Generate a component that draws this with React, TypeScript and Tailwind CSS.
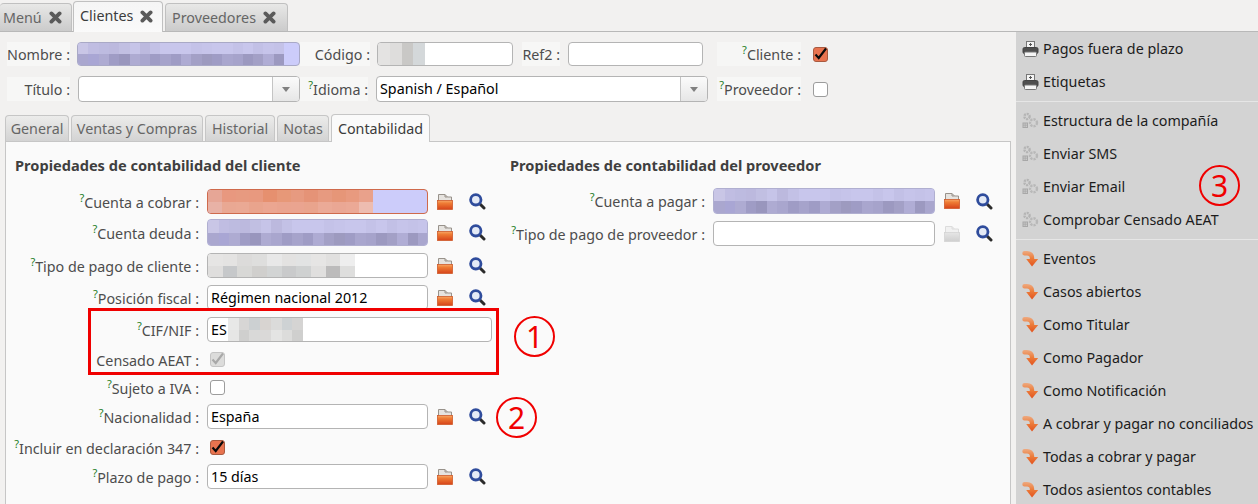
import React from "react";

// --- small drawn icons ---
const FolderIcon = ({ off = false }: { off?: boolean }) => (
  <svg width="16" height="16" viewBox="0 0 16 16" className="shrink-0">
    <defs>
      <linearGradient id="fo" x1="0" y1="0" x2="0" y2="1">
        <stop offset="0" stopColor="#f7a868" />
        <stop offset="0.3" stopColor="#ef7d35" />
        <stop offset="1" stopColor="#d6431a" />
      </linearGradient>
      <linearGradient id="fg" x1="0" y1="0" x2="0" y2="1">
        <stop offset="0" stopColor="#e6e6e6" />
        <stop offset="1" stopColor="#cfcfcf" />
      </linearGradient>
    </defs>
    <path d="M1.5 8V0.5h6.5l2.5 2.5H14.5V8z" fill={off ? "#f1f1f1" : "#e6e3df"} stroke={off ? "#dcdcdc" : "#98928b"} />
    <path d="M8 0.5V3h2.5" fill="none" stroke={off ? "#dcdcdc" : "#98928b"} />
    <rect x="0.5" y="6.5" width="15" height="9" fill={off ? "url(#fg)" : "url(#fo)"} stroke={off ? "#d4d4d4" : "#cf5a2a"} strokeWidth="0.8" />
  </svg>
);

const SearchIcon = () => (
  <svg width="17" height="17" viewBox="0 0 17 17" className="shrink-0">
    <line x1="10.5" y1="10.5" x2="15" y2="15" stroke="#2b2b2b" strokeWidth="3" strokeLinecap="round" />
    <circle cx="6.8" cy="6.8" r="5.2" fill="#e4eaf6" stroke="#2f4c9c" strokeWidth="2.8" />
  </svg>
);

const PrintIcon = () => (
  <svg width="17" height="16" viewBox="0 0 17 16" className="shrink-0">
    <rect x="4.5" y="0.5" width="8" height="7" fill="#f4f4f4" stroke="#777" />
    <path d="M8.5 2v3M7 3.5h3" stroke="#555" />
    <rect x="1" y="6.5" width="15" height="6" rx="1.5" fill="#4f4f4f" stroke="#444" />
    <rect x="2.5" y="11" width="12" height="4.5" rx="1" fill="#f5f5f5" stroke="#777" />
  </svg>
);

const GearIcon = () => (
  <svg width="17" height="17" viewBox="0 0 17 17" className="shrink-0">
    <circle cx="5" cy="4.5" r="2.6" fill="none" stroke="#b4b4b4" strokeWidth="2.4" strokeDasharray="2 0.9" />
    <circle cx="11.5" cy="10.8" r="3.5" fill="none" stroke="#b8b8b8" strokeWidth="2.4" strokeDasharray="2.2 1" />
    <rect x="1" y="11" width="4.5" height="4.5" fill="#c9c9c9" stroke="#a8a8a8" />
    <path d="M3.2 11v4.5M1 13.2h4.5" stroke="#a8a8a8" strokeWidth="0.7" />
  </svg>
);

const ArrowIcon = () => (
  <svg width="17" height="17" viewBox="0 0 17 17" className="shrink-0">
    <defs>
      <linearGradient id="ar" gradientUnits="userSpaceOnUse" x1="0" y1="0" x2="0" y2="17">
        <stop offset="0" stopColor="#eeb08a" />
        <stop offset="0.5" stopColor="#ec7c3a" />
        <stop offset="1" stopColor="#e2501c" />
      </linearGradient>
    </defs>
    <path d="M2.5 3.2H5C8 3.2 10 4.8 10 8v2" fill="none" stroke="url(#ar)" strokeWidth="4.4" strokeLinecap="round" />
    <path d="M4.2 9h12L10 16.5z" fill="url(#ar)" strokeLinejoin="round" />
  </svg>
);

const Pixels = ({ w, h, rows }: { w: number; h: number; rows: string[][] }) => (
  <svg width={w} height={h} viewBox={`0 0 ${w} ${h}`} shapeRendering="crispEdges" className="block shrink-0">
    {rows.map((cols, r) =>
      cols.map((c, i) => (
        <rect key={`${r}-${i}`} x={(i * w) / cols.length} y={(r * h) / rows.length} width={w / cols.length + 0.5} height={h / rows.length + 0.5} fill={c} />
      ))
    )}
  </svg>
);

const Help = () => <sup className="text-[11px] text-[#1d7d1d] top-[-6px] leading-none">?</sup>;

const Label = ({ text, help, className }: { text: string; help?: boolean; className: string }) => (
  <div className={`shrink-0 text-right whitespace-nowrap text-[#4d4d4d] pt-[2px] ${className}`}>
    {help && <Help />}
    {text} :
  </div>
);

const Check = ({ state }: { state: "on" | "off" | "locked" }) => {
  if (state === "off") return <div className="w-[15px] h-[15px] rounded-[3px] border border-[#9c9c9c] bg-white shrink-0" />;
  const on = state === "on";
  return (
    <div className={`w-[15px] h-[15px] rounded-[3px] border shrink-0 flex items-center justify-center ${on ? "bg-[#e8734f] border-[#a85a40]" : "bg-[#dcdcdb] border-[#c4c4c4]"}`}>
      <svg width="15" height="15" viewBox="0 0 15 15" className="shrink-0">
        <path d="M2.5 7.5l3.2 3.5L13 1.5" fill="none" stroke={on ? "#0a0a0a" : "#a8a8a8"} strokeWidth="2.1" />
      </svg>
    </div>
  );
};

const Field = ({ className, children }: { className: string; children?: React.ReactNode }) => (
  <div className={`shrink-0 rounded-[4px] border flex items-center overflow-hidden text-black ${className}`}>{children}</div>
);

const Chevron = ({ wide }: { wide: string }) => (
  <div className={`ml-auto h-full border-l border-[#c4c4c4] bg-gradient-to-b from-[#fbfbfb] to-[#e6e6e6] flex items-center justify-center ${wide}`}>
    <div className="w-0 h-0 border-l-[4px] border-r-[4px] border-t-[5px] border-l-transparent border-r-transparent border-t-[#808080]" />
  </div>
);

const Note = ({ n, className }: { n: string; className: string }) => (
  <div className={`absolute w-[41px] h-[41px] rounded-full border-[2.5px] border-[#f00000] text-[#f00000] text-[30px] leading-none flex items-center justify-center ${className}`}>
    {n}
  </div>
);

const TopTab = ({ text, active, className }: { text: string; active?: boolean; className: string }) => (
  <div
    className={`flex items-center gap-[7px] border border-b-0 border-[#c0c0c0] rounded-t-[4px] whitespace-nowrap ${
      active ? "h-[31px] pb-[2px] bg-gradient-to-b from-[#f5f5f5] to-[#fafafa] text-[#3c3c3c] z-10 -mb-px" : "h-[28px] bg-gradient-to-b from-[#e8e8e7] to-[#cbcbcb] text-[#666]"
    } ${className}`}
  >
    {text}
    <svg width="13" height="13" viewBox="0 0 13 13" className="shrink-0">
      <path d="M2.4 2.4l8.2 8.2M10.6 2.4l-8.2 8.2" stroke="#5a5a5a" strokeWidth="3.8" strokeLinecap="round" />
    </svg>
  </div>
);

const InnerTab = ({ text, active, className }: { text: string; active?: boolean; className: string }) => (
  <div
    className={`flex items-center justify-center border border-b-0 border-[#c6c6c6] rounded-t-[4px] whitespace-nowrap ${
      active ? "h-[28px] bg-[#fafafa] text-[#3c3c3c] z-10 -mb-px" : "h-[26px] bg-gradient-to-b from-[#ececeb] to-[#d3d3d3] text-[#666]"
    } ${className}`}
  >
    {text}
  </div>
);

const Tools = ({ off }: { off?: boolean }) => (
  <div className="flex items-center shrink-0">
    <div className="ml-[9px]">
      <FolderIcon off={off} />
    </div>
    <div className="ml-[16px]">
      <SearchIcon />
    </div>
  </div>
);

const boxWhite = "ml-[8px] h-[25px] w-[221px] bg-white border-[#b4b4b4] pl-[3px]";

const lilacTop = ["#c9c6e6", "#c0bde2", "#bdbbe0", "#bcb9de", "#c1bfe2", "#c6c4e8", "#bcb9de", "#c3c1e6", "#c8c6ec", "#c8c6ec", "#c8c6ec", "#c4c2e8", "#c6c4ea", "#c8c6ec", "#c8c6ec", "#c4c2e8", "#c8c6ec", "#c2c0e6", "#c6c4ea", "#c4c2e8", "#c6c4ea"];
const lilacLow = ["#aaa7cf", "#a9a6d4", "#aeabd2", "#9f9cc5", "#9996bd", "#aeabd2", "#a9a6ce", "#9f9cc5", "#a6a3cb", "#9f9cc5", "#aeabd3", "#a3a0c6", "#9d9abf", "#9f9cc5", "#a9a6ce", "#a6a3cb", "#9c99c0", "#a3a0c6", "#b0add5", "#9c99c0", "#a9a6ce"];

const sideA = ["Estructura de la compañía", "Enviar SMS", "Enviar Email", "Comprobar Censado AEAT"];
const sideB = ["Eventos", "Casos abiertos", "Como Titular", "Como Pagador", "Como Notificación", "A cobrar y pagar no conciliados", "Todas a cobrar y pagar", "Todos asientos contables"];

const SideItem = ({ icon, text }: { icon: React.ReactNode; text: string }) => (
  <div className="h-[33px] flex items-center pl-[6px] gap-[4px] whitespace-nowrap text-[#1c1c1c]">
    {icon}
    <span>{text}</span>
  </div>
);

export default function App() {
  return (
    <div className="relative w-[1258px] h-[504px] overflow-hidden bg-[#f2f1f0] flex flex-col text-[14.3px] font-['Noto_Sans',sans-serif]">
      {/* window tabs */}
      <div className="h-[32px] shrink-0 border-b border-[#b8b8b8] flex items-end pl-0 gap-[1px]">
        <TopTab text="Menú" className="w-[72px] pl-[3px] border-l-0" />
        <TopTab text="Clientes" active className="w-[90px] pl-[6px]" />
        <TopTab text="Proveedores" className="w-[123px] pl-[6px] ml-[1px]" />
      </div>

      <div className="flex flex-1 min-h-0">
        <div className="w-[1016px] shrink-0 flex flex-col">
          {/* header form */}
          <div className="flex items-center h-[24px] mt-[10px] pl-[7px]">
            <Label text="Nombre" className="w-[63px] bg-[#f7f7f6]" />
            <Field className="ml-[7px] h-[24px] w-[223px] bg-[#ccccfa] border-[#a9a9c6]">
              <Pixels w={206} h={24} rows={[lilacTop.slice(0, 20), lilacLow.slice(0, 20)]} />
            </Field>
            <Label text="Código" className="w-[70px] bg-[#f7f7f6] pl-[6px] ml-0" />
            <Field className="ml-[7px] h-[24px] w-[136px] bg-white border-[#b4b4b4]">
              <Pixels w={47} h={24} rows={[["#e4e3e2", "#dedddc", "#c9c8c6", "#d4d8da"]]} />
            </Field>
            <Label text="Ref2" className="w-[38px] ml-[9px] bg-[#f7f7f6]" />
            <Field className="ml-[8px] h-[24px] w-[135px] bg-white border-[#b4b4b4]" />
            <Label text="Cliente" help className="w-[84px] ml-[14px] bg-[#f6f6f5]" />
            <div className="ml-[12px]">
              <Check state="on" />
            </div>
          </div>
          <div className="flex items-center h-[26px] mt-[10px] pl-[7px]">
            <Label text="Título" className="w-[63px] bg-[#f7f7f6]" />
            <Field className="ml-[8px] h-[26px] w-[222px] bg-white border-[#b4b4b4]">
              <Chevron wide="w-[27px]" />
            </Field>
            <Label text="Idioma" help className="w-[68px] bg-[#f7f7f6] ml-0" />
            <Field className="ml-[8px] h-[26px] w-[332px] bg-white border-[#b4b4b4] pl-[3px]">
              <span>Spanish / Español</span>
              <Chevron wide="w-[27px]" />
            </Field>
            <Label text="Proveedor" help className="w-[84px] ml-[9px] bg-[#f7f7f6]" />
            <div className="ml-[12px]">
              <Check state="off" />
            </div>
          </div>

          {/* notebook tabs */}
          <div className="flex items-end h-[28px] mt-[11px] pl-[5px] gap-[2px]">
            <InnerTab text="General" className="w-[64px]" />
            <InnerTab text="Ventas y Compras" className="w-[132px]" />
            <InnerTab text="Historial" className="w-[70px]" />
            <InnerTab text="Notas" className="w-[52px]" />
            <InnerTab text="Contabilidad" active className="w-[99px]" />
          </div>

          <div className="flex-1 ml-[5px] mr-[5px] border border-b-0 border-[#c6c6c6] bg-[#fafafa] flex">
            {/* customer column */}
            <div className="w-[504px] shrink-0 flex flex-col">
              <div className="h-[20px] mt-[13px] pl-[9px] font-bold text-[#3f3f3f] text-[14.6px] whitespace-nowrap">Propiedades de contabilidad del cliente</div>
              <div className="flex items-center mt-[14px] h-[25px]">
                <Label text="Cuenta a cobrar" help className="w-[193px]" />
                <Field className="ml-[8px] h-[25px] w-[221px] bg-[#ccccfa] border-[#cf6a4c]">
                  <Pixels w={165} h={23} rows={[["#e6a696", "#e8987f", "#e79a80", "#e8997f", "#e6906f", "#e79878", "#e79a80", "#e59377", "#e79a80", "#e69678", "#e89a7f", "#e9a18b"], ["#e8b2a6", "#e9a893", "#eaa994", "#e9a48d", "#eba691", "#eaa48f", "#eaa490", "#e9a48d", "#ebaa97", "#eaa794", "#eba996", "#edbcb0"]]} />
                </Field>
                <Tools />
              </div>
              <div className="flex items-center mt-[5px] h-[27px]">
                <Label text="Cuenta deuda" help className="w-[193px]" />
                <Field className="ml-[8px] h-[27px] w-[221px] bg-[#ccccfa] border-[#b0afd0]">
                  <Pixels w={221} h={27} rows={[lilacTop, lilacLow]} />
                </Field>
                <Tools />
              </div>
              <div className="flex items-center mt-[7px] h-[25px]">
                <Label text="Tipo de pago de cliente" help className="w-[193px]" />
                <Field className={boxWhite + " !pl-0"}>
                  <Pixels w={147} h={23} rows={[["#e6e5e4", "#e4e3e2", "#dcdbda", "#dededd", "#e8e8e8", "#e3e2e1", "#e2e3e3", "#e6e5e4", "#e1e0df", "#eeeeee"], ["#dfdedd", "#c6c8ca", "#d8d8d6", "#d0cfcd", "#d2d4d4", "#c9cacb", "#cfd1d1", "#e0dfde", "#bcbbbb", "#dededd"]]} />
                </Field>
                <Tools />
              </div>
              <div className="flex items-center mt-[7px] h-[25px]">
                <Label text="Posición fiscal" help className="w-[193px]" />
                <Field className={boxWhite}>Régimen nacional 2012</Field>
                <Tools />
              </div>
              <div className="flex items-center mt-[7px] h-[25px]">
                <Label text="CIF/NIF" help className="w-[193px]" />
                <Field className="ml-[8px] h-[25px] w-[285px] bg-white border-[#b4b4b4] pl-[3px]">
                  <span className="w-[17px]">ES</span>
                  <Pixels w={75} h={23} rows={[["#e8e8e7", "#d7d6d5", "#ccd0d2", "#d8d4d1", "#dbdbda", "#ced2d4", "#d5d4d3"], ["#e6e6e5", "#cfcfce", "#d9d9d8", "#dad9d8", "#e4e4e3", "#dcdcdb", "#cfcfce"]]} />
                </Field>
              </div>
              <div className="flex items-center mt-[7px] h-[21px]">
                <Label text="Censado AEAT" className="w-[193px]" />
                <div className="ml-[11px]">
                  <Check state="locked" />
                </div>
              </div>
              <div className="flex items-center mt-[7px] h-[21px]">
                <Label text="Sujeto a IVA" help className="w-[193px]" />
                <div className="ml-[11px]">
                  <Check state="off" />
                </div>
              </div>
              <div className="flex items-center mt-[6px] h-[25px]">
                <Label text="Nacionalidad" help className="w-[193px]" />
                <Field className={boxWhite}>España</Field>
                <Tools />
              </div>
              <div className="flex items-center mt-[5px] h-[27px]">
                <Label text="Incluir en declaración 347" help className="w-[193px]" />
                <div className="ml-[11px]">
                  <Check state="on" />
                </div>
              </div>
              <div className="flex items-center mt-[3px] h-[25px]">
                <Label text="Plazo de pago" help className="w-[193px]" />
                <Field className={boxWhite}>15 días</Field>
                <Tools />
              </div>
            </div>

            {/* supplier column */}
            <div className="flex-1 flex flex-col">
              <div className="h-[20px] mt-[13px] font-bold text-[#3f3f3f] text-[14.6px] whitespace-nowrap">Propiedades de contabilidad del proveedor</div>
              <div className="flex items-center mt-[13px] h-[26px]">
                <Label text="Cuenta a pagar" help className="w-[195px]" />
                <Field className="ml-[8px] h-[26px] w-[222px] bg-[#ccccfa] border-[#b0afd0]">
                  <Pixels w={222} h={26} rows={[lilacTop, lilacLow]} />
                </Field>
                <Tools />
              </div>
              <div className="flex items-center mt-[7px] h-[25px]">
                <Label text="Tipo de pago de proveedor" help className="w-[195px]" />
                <Field className="ml-[8px] h-[25px] w-[222px] bg-white border-[#b4b4b4]" />
                <Tools off />
              </div>
            </div>
          </div>
        </div>

        {/* action sidebar */}
        <div className="flex-1 bg-[#d3d3d3]">
          <div className="pb-[3px]">
            <SideItem icon={<PrintIcon />} text="Pagos fuera de plazo" />
            <SideItem icon={<PrintIcon />} text="Etiquetas" />
          </div>
          <div className="pt-[2px] pb-[3px] border-t border-[#e6e6e6]">
            {sideA.map((t) => (
              <SideItem key={t} icon={<GearIcon />} text={t} />
            ))}
          </div>
          <div className="pt-[2px] border-t border-[#e6e6e6]">
            {sideB.map((t) => (
              <SideItem key={t} icon={<ArrowIcon />} text={t} />
            ))}
          </div>
        </div>
      </div>

      {/* red annotations drawn over the screenshot */}
      <div className="absolute left-[88px] top-[308px] w-[411px] h-[67px] border-[3px] border-[#f00000]" />
      <Note n="1" className="left-[514px] top-[316px]" />
      <Note n="2" className="left-[496px] top-[397px]" />
      <Note n="3" className="left-[1199px] top-[165px]" />
    </div>
  );
}
